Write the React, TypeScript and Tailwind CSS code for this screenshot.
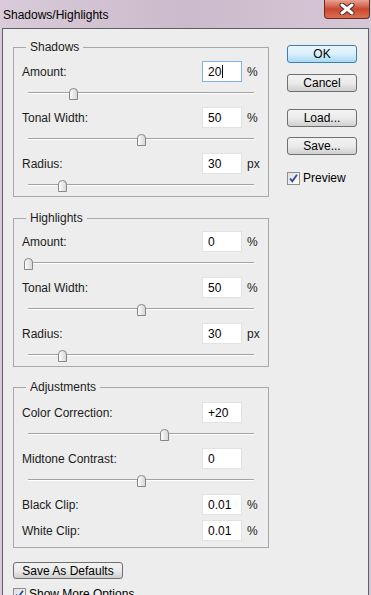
import React from "react";

const font = "font-['Liberation_Sans',Arial,sans-serif]";

function Thumb({ pct }: { pct: number }) {
  return (
    <svg
      className="absolute top-[-5px]"
      style={{ left: `calc(${pct}% - 4px)` }}
      width="9"
      height="12"
      viewBox="0 0 9 12"
    >
      <defs>
        <linearGradient id="thumbfill" x1="0" y1="0" x2="1" y2="0">
          <stop offset="0" stopColor="#ffffff" />
          <stop offset="1" stopColor="#d4d4d4" />
        </linearGradient>
      </defs>
      <path
        d="M0.5 11.5 V4 Q0.5 0.5 4.5 0.5 Q8.5 0.5 8.5 4 V11.5 Z"
        fill="url(#thumbfill)"
        stroke="#878787"
      />
    </svg>
  );
}

function Slider({ pct, last }: { pct: number; last?: boolean }) {
  return (
    <div className={last ? "h-[22px] pt-[10px]" : "h-[25px] pt-[10px]"}>
      <div className="relative ml-[14px] h-[2px] w-[226px] border-t border-[#a3a3a3] bg-white">
        <Thumb pct={pct} />
      </div>
    </div>
  );
}

function Row({
  label,
  value,
  unit,
  focused,
}: {
  label: string;
  value: string;
  unit?: string;
  focused?: boolean;
}) {
  return (
    <div className="flex h-[21px] items-center pl-[8px]">
      <span className="flex-1 text-[12px] text-[#1b1b1b]">{label}</span>
      <div
        className={
          focused
            ? "flex h-[21px] w-[40px] items-center border border-[#7eb4ea] bg-white pl-[5px] text-[12px]"
            : "flex h-[21px] w-[40px] items-center border border-[#e2e2e2] bg-white pl-[5px] text-[12px]"
        }
      >
        {value}
        {focused && <span className="ml-[1px] h-[13px] w-[1px] bg-black" />}
      </div>
      <span className="ml-[5px] w-[21px] text-[12px] text-[#1b1b1b]">{unit}</span>
    </div>
  );
}

function Group({ title, children, className }: { title: string; children: React.ReactNode; className?: string }) {
  return (
    <fieldset className={`w-[256px] border border-[#a8a8a8] ${className ?? ""}`}>
      <legend className="ml-[12px] px-[4px] text-[12px] leading-[16px] text-[#1b1b1b]">{title}</legend>
      {children}
    </fieldset>
  );
}

function Button({ label, primary, className }: { label: string; primary?: boolean; className?: string }) {
  return (
    <div
      className={
        primary
          ? `flex h-[18px] w-[70px] items-center justify-center rounded-[3px] border border-[#3c7fb1] bg-gradient-to-b from-[#eaf6fd] via-[#d9f0fc] to-[#a7d9f5] text-[12px] ${className ?? ""}`
          : `flex h-[18px] w-[70px] items-center justify-center rounded-[3px] border border-[#707070] bg-gradient-to-b from-[#f2f2f2] via-[#ebebeb] to-[#cfcfcf] text-[12px] ${className ?? ""}`
      }
    >
      {label}
    </div>
  );
}

function Check() {
  return (
    <svg width="13" height="13" viewBox="0 0 13 13">
      <defs>
        <linearGradient id="chk" x1="0" y1="0" x2="1" y2="1">
          <stop offset="0" stopColor="#dcdcdc" />
          <stop offset="1" stopColor="#ffffff" />
        </linearGradient>
      </defs>
      <rect x="0.5" y="0.5" width="12" height="12" fill="url(#chk)" stroke="#8e8f8f" />
      <path d="M3 6.5 L5.3 9.2 L10 2.8" fill="none" stroke="#2b4aa6" strokeWidth="1.8" />
    </svg>
  );
}

export default function App() {
  return (
    <div
      className={`${font} flex h-[595px] w-[371px] flex-col overflow-hidden bg-gradient-to-r from-[#d9cbd9] via-[#cbbacb] to-[#d6c7d6] text-black`}
    >
      {/* title bar */}
      <div className="flex h-[28px] shrink-0">
        <span className="pl-[3px] pt-[6px] text-[12px] text-black">Shadows/Highlights</span>
        <div className="ml-auto mr-[1px] flex h-[19px] w-[46px] items-center justify-center rounded-b-[4px] border border-t-0 border-[#6b2a20] bg-gradient-to-b from-[#e9a192] via-[#c9472f] to-[#d9704f]">
          <svg width="16" height="12" viewBox="0 0 16 12">
            <path d="M3 2 L13 10 M13 2 L3 10" stroke="#4a2a26" strokeWidth="5" strokeLinecap="round" />
            <path d="M3 2 L13 10 M13 2 L3 10" stroke="#ffffff" strokeWidth="3" strokeLinecap="round" />
          </svg>
        </div>
      </div>

      {/* client area */}
      <div className="mx-[2px] flex flex-1 border-l border-r border-t border-[#5f5f68] bg-[#ededed] pl-[10px] pt-[10px]">
        <div className="flex flex-col">
          <Group title="Shadows">
            <div className="mt-[6px]">
              <Row label="Amount:" value="20" unit="%" focused />
              <Slider pct={20} />
              <Row label="Tonal Width:" value="50" unit="%" />
              <Slider pct={50} />
              <Row label="Radius:" value="30" unit="px" />
              <Slider pct={15} last />
            </div>
          </Group>

          <Group title="Highlights" className="mt-[13px]">
            <div className="mt-[5px]">
              <Row label="Amount:" value="0" unit="%" />
              <Slider pct={0} />
              <Row label="Tonal Width:" value="50" unit="%" />
              <Slider pct={50} />
              <Row label="Radius:" value="30" unit="px" />
              <Slider pct={15} last />
            </div>
          </Group>

          <Group title="Adjustments" className="mt-[12px]">
            <div className="mt-[7px] pb-[6px]">
              <Row label="Color Correction:" value="+20" />
              <Slider pct={60} />
              <Row label="Midtone Contrast:" value="0" />
              <Slider pct={50} />
              <Row label="Black Clip:" value="0.01" unit="%" />
              <div className="mt-[5px]">
                <Row label="White Clip:" value="0.01" unit="%" />
              </div>
            </div>
          </Group>

          <div className="mt-[14px] flex h-[17px] w-[110px] items-center justify-center rounded-[3px] border border-[#707070] bg-gradient-to-b from-[#f2f2f2] via-[#ebebeb] to-[#cfcfcf] text-[12px]">
            Save As Defaults
          </div>

          <div className="mt-[6px] flex items-center gap-[3px]">
            <Check />
            <span className="text-[12px]">Show More Options</span>
          </div>
        </div>

        <div className="ml-[18px] flex flex-col pt-[6px]">
          <Button label="OK" primary />
          <Button label="Cancel" className="mt-[11px]" />
          <Button label="Load..." className="mt-[17px]" />
          <Button label="Save..." className="mt-[10px]" />
          <div className="mt-[14px] flex items-center gap-[3px]">
            <Check />
            <span className="text-[12px]">Preview</span>
          </div>
        </div>
      </div>
    </div>
  );
}
